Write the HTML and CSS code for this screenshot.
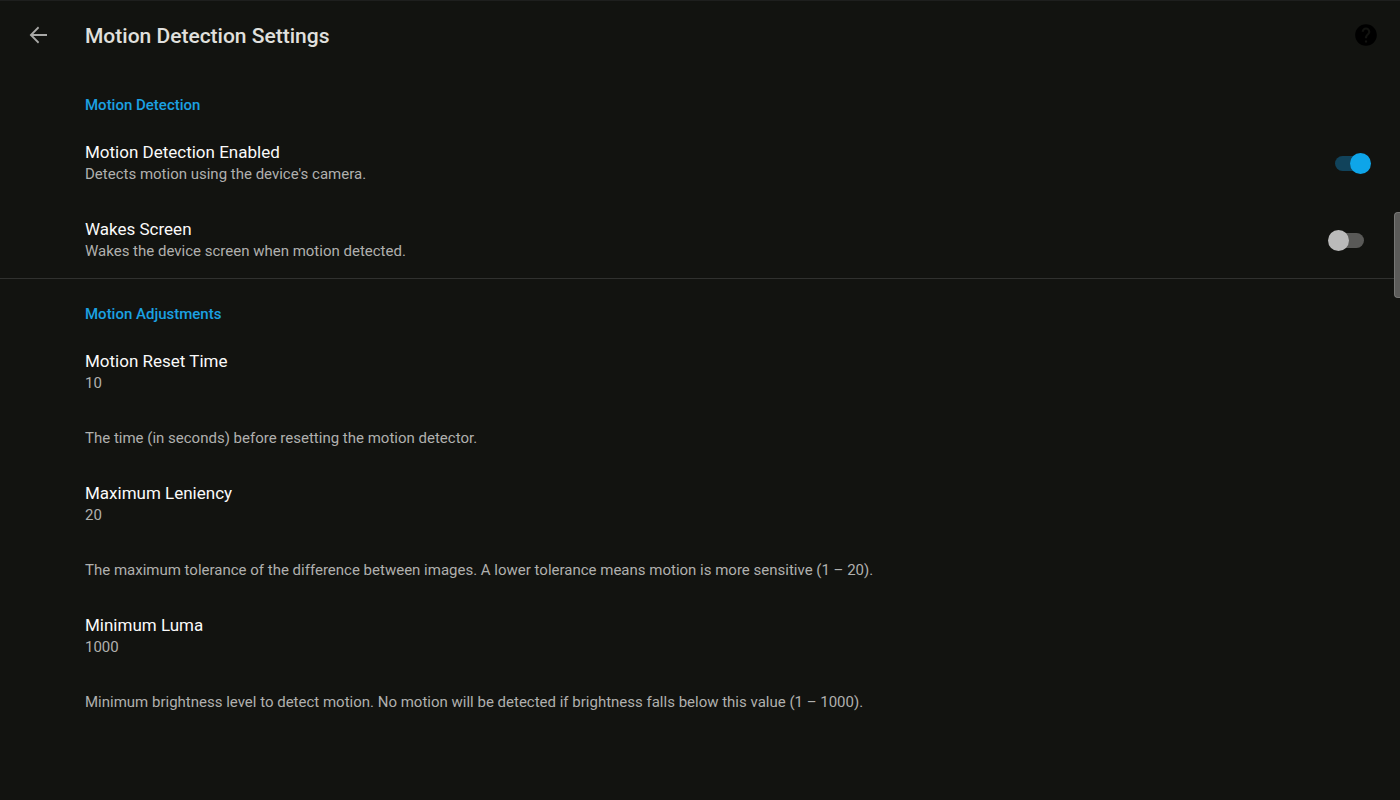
FILE: index.html
```html
<!DOCTYPE html>
<html lang="en">
<head>
<meta charset="utf-8">
<meta name="viewport" content="width=device-width, initial-scale=1">
<title>Motion Detection Settings</title>
<link rel="stylesheet" href="styles.css">
</head>
<body>
<header class="app-bar">
  <button class="icon-button" type="button" aria-label="Back">
    <svg class="icon-back" viewBox="0 0 24 24" aria-hidden="true"><path d="M21 11H7.300l5.900-5.900L12 3.600 3.600 12l8.400 8.400 1.200-1.500L7.300 13H21z"/></svg>
  </button>
  <h1 class="app-title">Motion Detection Settings</h1>
  <button class="icon-button" type="button" aria-label="Help">
    <svg class="icon-help" viewBox="0 0 24 24" aria-hidden="true"><path d="M12 2C6.480 2 2 6.480 2 12s4.480 10 10 10 10-4.480 10-10S17.520 2 12 2zm1 17h-2v-2h2v2zm2.070-7.750l-.9.920C13.450 12.900 13 13.500 13 15h-2v-.5c0-1.100.450-2.100 1.170-2.830l1.240-1.260c.370-.360.590-.860.590-1.410 0-1.100-.9-2-2-2s-2 .9-2 2H8c0-2.210 1.790-4 4-4s4 1.790 4 4c0 .880-.360 1.680-.930 2.250z"/></svg>
  </button>
</header>
<main>
  <section class="group">
    <h2 class="group-title">Motion Detection</h2>
    <label class="row" for="motion-enabled">
      <span class="row-text">
        <span class="row-title">Motion Detection Enabled</span>
        <span class="row-summary">Detects motion using the device's camera.</span>
      </span>
      <input class="switch" id="motion-enabled" type="checkbox" role="switch" checked>
    </label>
    <label class="row" for="wakes-screen">
      <span class="row-text">
        <span class="row-title">Wakes Screen</span>
        <span class="row-summary">Wakes the device screen when motion detected.</span>
      </span>
      <input class="switch" id="wakes-screen" type="checkbox" role="switch">
    </label>
  </section>
  <section class="group">
    <h2 class="group-title">Motion Adjustments</h2>
    <button class="row" type="button">
      <span class="row-text">
        <span class="row-title">Motion Reset Time</span>
        <span class="row-summary">10</span>
      </span>
    </button>
    <p class="row row-summary">The time (in seconds) before resetting the motion detector.</p>
    <button class="row" type="button">
      <span class="row-text">
        <span class="row-title">Maximum Leniency</span>
        <span class="row-summary">20</span>
      </span>
    </button>
    <p class="row row-summary">The maximum tolerance of the difference between images. A lower tolerance means motion is more sensitive (1 – 20).</p>
    <button class="row" type="button">
      <span class="row-text">
        <span class="row-title">Minimum Luma</span>
        <span class="row-summary">1000</span>
      </span>
    </button>
    <p class="row row-summary">Minimum brightness level to detect motion. No motion will be detected if brightness falls below this value (1 – 1000).</p>
  </section>
</main>
<div class="edge-handle" aria-hidden="true"></div>
</body>
</html>
```
FILE: styles.css
```css
* {
  box-sizing: border-box;
}

body {
  margin: 0;
  min-height: 100vh;
  background: #121310;
  color: #fafafa;
  font-family: Roboto, "Liberation Sans", sans-serif;
  border-top: 1px solid #1e1f1e;
}

.app-bar {
  display: flex;
  align-items: center;
  height: 69px;
  padding: 0 21px 1px 26px;
}

.icon-button {
  display: flex;
  padding: 0;
  border: 0;
  background: none;
}

.icon-back {
  width: 24px;
  height: 24px;
  fill: #a9a9a7;
}

.icon-help {
  width: 26px;
  height: 26px;
  fill: #000;
}

.app-title {
  flex: 1;
  margin: 0 0 0 35px;
  padding-top: 2px;
  color: #e0e0de;
  font-size: 21px;
  font-weight: 500;
  line-height: 28px;
}

.group + .group {
  border-top: 1px solid #30312f;
}

.group-title {
  margin: 0;
  padding: 25px 29px 9px 85px;
  color: #1ba1e2;
  font-size: 15px;
  font-weight: 500;
  line-height: 20px;
}

.row {
  display: flex;
  align-items: center;
  justify-content: space-between;
  width: 100%;
  margin: 0;
  padding: 17px 29px 16px 85px;
  border: 0;
  background: none;
  font-family: inherit;
  text-align: left;
}

.row-text {
  display: flex;
  flex-direction: column;
}

.row-title {
  color: #fafafa;
  font-size: 17px;
  line-height: 22px;
}

.row-summary {
  color: #b0b0ae;
  font-size: 15px;
  line-height: 22px;
}

.switch {
  appearance: none;
  display: flex;
  align-items: center;
  flex: none;
  width: 43px;
  height: 21px;
  margin: 0;
}

.switch::before {
  content: "";
  width: 29px;
  height: 15px;
  margin-left: 7px;
  border-radius: 8px;
  background: #595957;
}

.switch::after {
  content: "";
  width: 21px;
  height: 21px;
  margin-left: -36px;
  border-radius: 50%;
  background: #bababa;
}

.switch:checked::before {
  background: #11435b;
}

.switch:checked::after {
  margin-left: -14px;
  background: #0ea5e9;
}

.edge-handle {
  position: fixed;
  top: 212px;
  right: 0;
  width: 6px;
  height: 86px;
  border: 1px solid #777775;
  border-right: 0;
  border-radius: 4px 0 0 4px;
  background: #5b5b59;
}
```
